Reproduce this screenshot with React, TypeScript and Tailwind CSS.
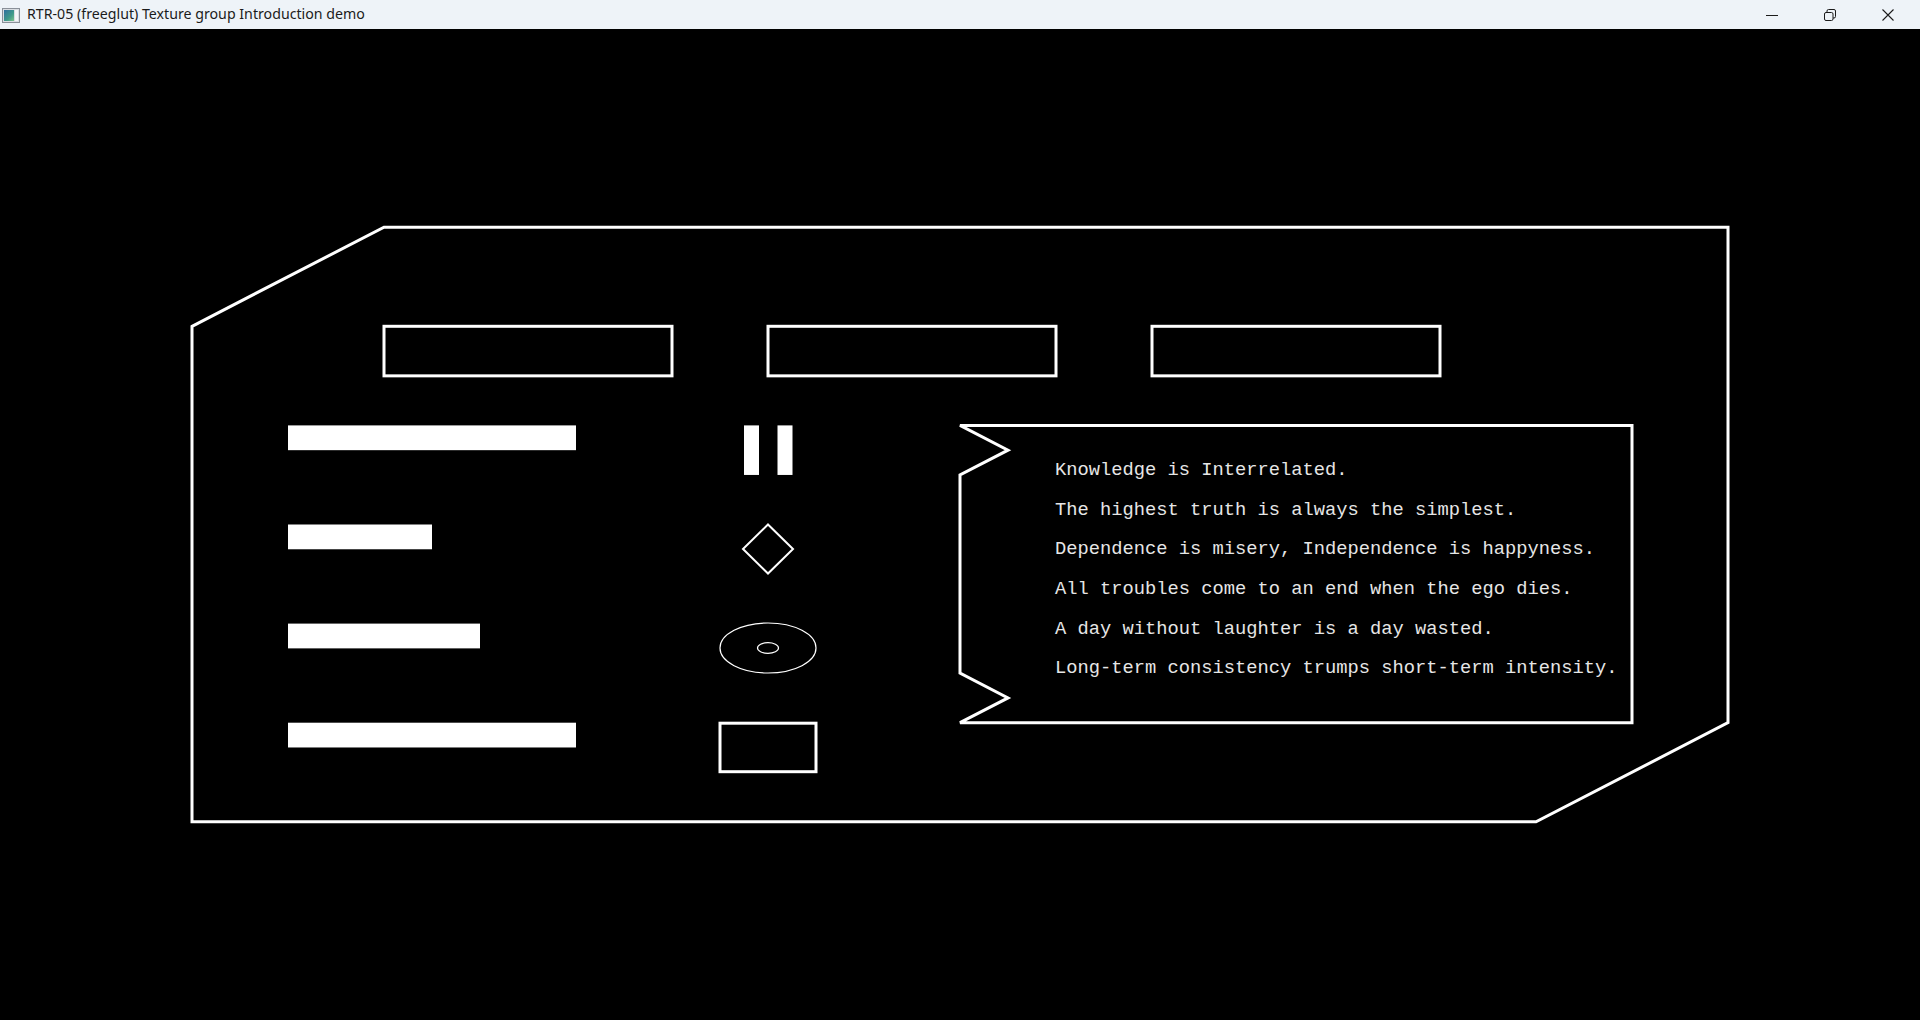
import React from "react";

const quotes = [
  "Knowledge is Interrelated.",
  "The highest truth is always the simplest.",
  "Dependence is misery, Independence is happyness.",
  "All troubles come to an end when the ego dies.",
  "A day without laughter is a day wasted.",
  "Long-term consistency trumps short-term intensity.",
];

function AppIcon() {
  return (
    <svg width="18" height="15" viewBox="0 0 18 15">
      <defs>
        <linearGradient id="ig" x1="0" y1="0" x2="1" y2="1">
          <stop offset="0" stopColor="#2f6f9f" />
          <stop offset="0.6" stopColor="#3f9a8a" />
          <stop offset="1" stopColor="#7cc48a" />
        </linearGradient>
      </defs>
      <rect x="0.5" y="0.5" width="17" height="14" fill="#d9dde2" stroke="#8a9099" />
      <rect x="2" y="2" width="10" height="11" fill="url(#ig)" />
      <rect x="13" y="2" width="3" height="11" fill="#f4f6f8" />
    </svg>
  );
}

function Canvas() {
  const W = 1920;
  const H = 991;
  const X = (f: number) => f * W;
  const Y = (f: number) => 29 + f * H;
  const outer = [
    [X(0.1), Y(0.3)],
    [X(0.2), Y(0.2)],
    [X(0.9), Y(0.2)],
    [X(0.9), Y(0.7)],
    [X(0.8), Y(0.8)],
    [X(0.1), Y(0.8)],
  ]
    .map((p) => p.join(","))
    .join(" ");
  const box = [
    [X(0.85), Y(0.4)],
    [X(0.85), Y(0.7)],
    [X(0.5), Y(0.7)],
    [X(0.525), Y(0.675)],
    [X(0.5), Y(0.65)],
    [X(0.5), Y(0.45)],
    [X(0.525), Y(0.425)],
    [X(0.5), Y(0.4)],
  ]
    .map((p) => p.join(","))
    .join(" ");
  const bars: [number, number, number][] = [
    [0.3, 0.4, 0.425],
    [0.225, 0.5, 0.525],
    [0.25, 0.6, 0.625],
    [0.3, 0.7, 0.725],
  ];
  return (
    <svg
      className="absolute inset-0"
      width="1920"
      height="991"
      viewBox="0 29 1920 991"
    >
      <polygon points={outer} fill="none" stroke="#ffffff" strokeWidth="3" strokeLinejoin="miter" />
      {[0.2, 0.4, 0.6].map((x) => (
        <rect
          key={x}
          x={X(x)}
          y={Y(0.3)}
          width={X(0.15)}
          height={Y(0.35) - Y(0.3)}
          fill="none"
          stroke="#ffffff"
          strokeWidth="3"
        />
      ))}
      {bars.map(([x2, y1, y2]) => (
        <rect
          key={y1}
          x={X(0.15)}
          y={Y(y1)}
          width={X(x2) - X(0.15)}
          height={Y(y2) - Y(y1)}
          fill="#ffffff"
        />
      ))}
      <rect x={744} y={Y(0.4)} width={15} height={Y(0.45) - Y(0.4)} fill="#ffffff" />
      <rect x={777.5} y={Y(0.4)} width={15} height={Y(0.45) - Y(0.4)} fill="#ffffff" />
      <polygon
        points="768,524.5 793,549 768,573.5 743,549"
        fill="none"
        stroke="#ffffff"
        strokeWidth="2"
      />
      <ellipse cx={768} cy={648} rx={48} ry={25} fill="none" stroke="#ffffff" strokeWidth="1.2" />
      <ellipse cx={768} cy={648} rx={10.5} ry={5.3} fill="none" stroke="#ffffff" strokeWidth="1.2" />
      <rect x={720} y={723.2} width={96} height={48.5} fill="none" stroke="#ffffff" strokeWidth="3" />
      <polygon points={box} fill="none" stroke="#ffffff" strokeWidth="3" />
    </svg>
  );
}

export default function App() {
  return (
    <div className="w-[1920px] h-[1020px] flex flex-col bg-black overflow-hidden">
      <div className="h-[29px] shrink-0 flex items-center bg-[#eef3f8] text-[#1b1b1b]">
        <div className="pl-[2px] pt-[2px] flex items-center">
          <AppIcon />
        </div>
        <span
          className="ml-[7px] text-[14.2px] leading-none whitespace-nowrap"
          style={{ fontFamily: '"Segoe UI", "Noto Sans", "Open Sans", sans-serif' }}
        >
          RTR-05 (freeglut) Texture group Introduction demo
        </span>
        <div className="ml-auto flex items-center pr-[3px] h-full">
          <div className="w-[58px] h-full flex items-center justify-center">
            <svg width="14" height="14" viewBox="0 0 14 14">
              <path d="M1 7.5h12" stroke="#1b1b1b" strokeWidth="1" />
            </svg>
          </div>
          <div className="w-[58px] h-full flex items-center justify-center">
            <svg width="14" height="14" viewBox="0 0 14 14">
              <rect x="1.5" y="4.5" width="8.5" height="8" rx="1.5" fill="none" stroke="#1b1b1b" strokeWidth="1" />
              <path d="M4 4.5V3a1.5 1.5 0 0 1 1.5-1.5H11A1.5 1.5 0 0 1 12.5 3v5.5A1.5 1.5 0 0 1 11 10h-1" fill="none" stroke="#1b1b1b" strokeWidth="1" />
            </svg>
          </div>
          <div className="w-[58px] h-full flex items-center justify-center">
            <svg width="14" height="14" viewBox="0 0 14 14">
              <path d="M1.5 1.5l11 11M12.5 1.5l-11 11" stroke="#1b1b1b" strokeWidth="1.1" />
            </svg>
          </div>
        </div>
      </div>
      <div className="relative flex-1 bg-black">
        <Canvas />
        <div
          className="absolute left-[1055px] top-[422px] flex flex-col text-[18.75px] leading-[39.64px] text-[#e6e6e6] whitespace-pre"
          style={{ fontFamily: '"Liberation Mono", "DejaVu Sans Mono", monospace' }}
        >
          {quotes.map((q) => (
            <div key={q}>{q}</div>
          ))}
        </div>
      </div>
    </div>
  );
}
